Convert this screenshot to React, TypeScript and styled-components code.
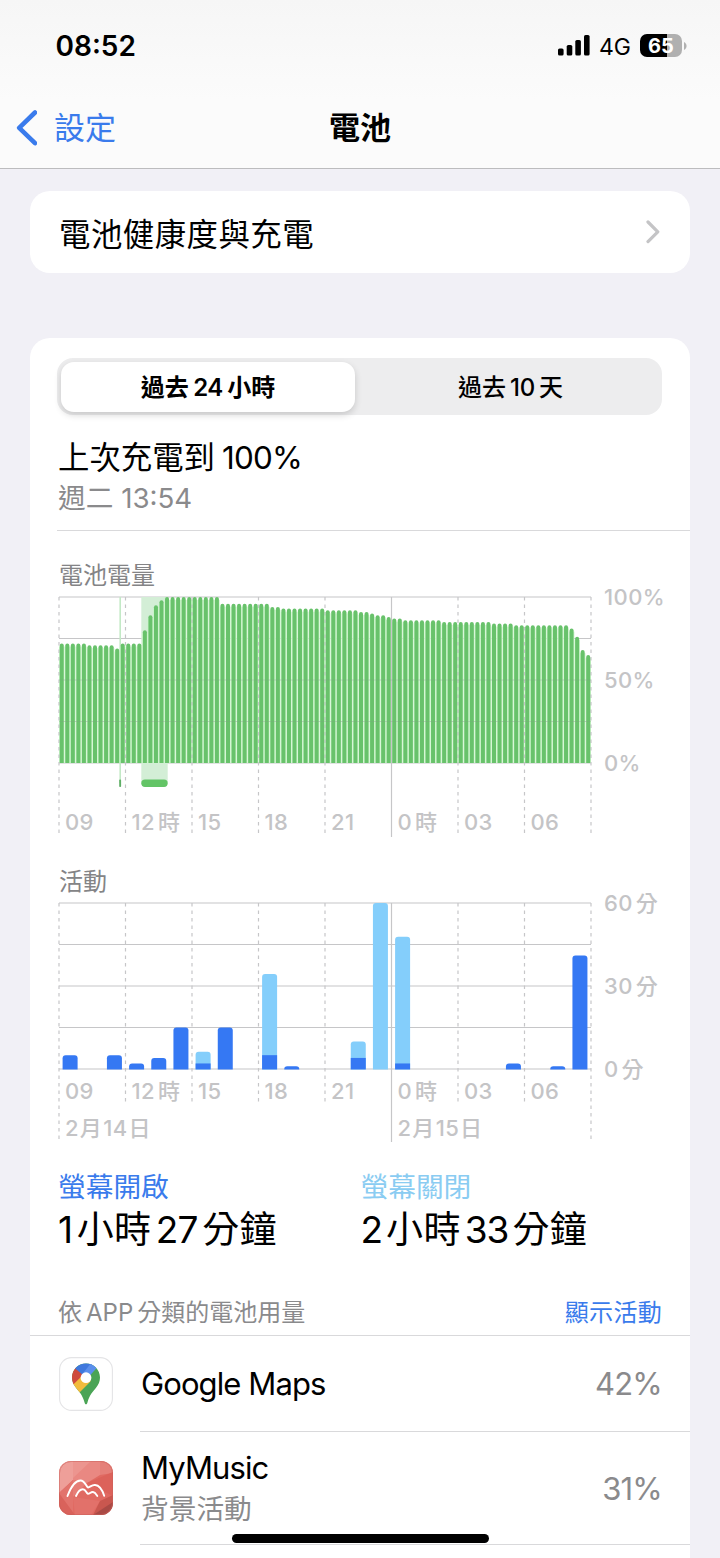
import React from 'react';
import styled, { createGlobalStyle } from 'styled-components';

const GlobalStyle = createGlobalStyle`
  *, *::before, *::after { box-sizing: border-box; }
  body {
    margin: 0;
    background: #f1f0f6;
    color: #000;
    font-family: Inter, "Noto Sans CJK TC", sans-serif;
    text-autospace: no-autospace;
  }
`;

const Screen = styled.div`
  position: relative;
  width: 720px;
  height: 1558px;
  overflow: hidden;
  display: flex;
  flex-direction: column;
`;

/* ---------- mixed-script text ---------- */

const Latin = styled.span<{ $lead: number; $trail: number; $ls: number }>`
  margin-left: ${(p) => p.$lead}px;
  margin-right: ${(p) => p.$trail}px;
  letter-spacing: ${(p) => p.$ls}px;
`;

const splitRuns = (text: string) => text.match(/[\u3000-\u9fff]+|[^\u3000-\u9fff]+/g) ?? [];
const isCjk = (run: string) => /[\u3000-\u9fff]/.test(run);

function Mixed({ text, gap = 4, ls = 0 }: { text: string; gap?: number; ls?: number }) {
  const runs = splitRuns(text);
  return (
    <>
      {runs.map((run, i) =>
        isCjk(run) ? (
          <React.Fragment key={i}>{run}</React.Fragment>
        ) : (
          <Latin key={i} $ls={ls} $lead={i > 0 ? gap : 0} $trail={i < runs.length - 1 ? gap : 0}>
            {run}
          </Latin>
        ),
      )}
    </>
  );
}

/* ---------- header ---------- */

const Header = styled.header`
  flex: none;
  height: 169px;
  border-bottom: 1px solid #bcbcbe;
  background: linear-gradient(#f6f6f6, #fbfbfb 60%);
`;

const StatusBar = styled.div`
  height: 91px;
  padding: 0 33px 0 55.5px;
  display: flex;
  align-items: center;
  justify-content: space-between;
`;

const Clock = styled.span`
  font-size: 28px;
  font-weight: 600;
  line-height: 34px;
  letter-spacing: 0;
`;

const StatusIcons = styled.div`
  display: flex;
  align-items: center;
`;

const Network = styled.span`
  margin: 2px 9px 0;
  font-size: 23px;
  line-height: 28px;
`;

const Battery = styled.div`
  display: flex;
  align-items: center;
  gap: 2px;
`;

const BatteryBody = styled.div`
  width: 42px;
  height: 23px;
  border-radius: 7px;
  background: linear-gradient(90deg, #000 65%, #b0b0b0 65%);
  color: #fff;
  font-size: 20px;
  font-weight: 700;
  line-height: 25px;
  text-align: center;
`;

const NavBar = styled.nav`
  height: 73px;
  display: grid;
  grid-template-columns: 1fr auto 1fr;
  align-items: center;
  padding: 0 16px;
`;

const Back = styled.a`
  display: flex;
  align-items: center;
  gap: 17px;
  color: #3a7bec;
  font-size: 31px;
  line-height: 40px;
`;

const NavTitle = styled.h1`
  margin: 0;
  font-size: 31px;
  font-weight: 600;
  line-height: 40px;
`;

/* ---------- cards ---------- */

const Content = styled.main`
  padding: 22px 30px 0;
`;

const LinkCard = styled.a`
  display: flex;
  align-items: center;
  justify-content: space-between;
  height: 82px;
  padding: 0 30px 0 29px;
  border-radius: 20px;
  background: #fff;
  font-size: 31.4px;
  letter-spacing: 0.5px;
`;

const Card = styled.section`
  margin-top: 65px;
  padding-top: 20px;
  height: 1300px;
  border-radius: 20px;
  background: #fff;
`;

const Segmented = styled.div`
  display: grid;
  grid-template-columns: 294px 1fr;
  gap: 8px;
  height: 57px;
  margin: 0 28px 0 27px;
  padding: 4px;
  border-radius: 16px;
  background: #ededee;
`;

const Segment = styled.div<{ $active?: boolean }>`
  height: 50px;
  border-radius: 13px;
  background: ${(p) => (p.$active ? '#fff' : 'transparent')};
  box-shadow: ${(p) => (p.$active ? '0 3px 7px rgba(0, 0, 0, 0.16)' : 'none')};
  font-size: 24px;
  font-weight: ${(p) => (p.$active ? 600 : 500)};
  line-height: 52px;
  text-align: center;
`;

const LastCharge = styled.div`
  margin: 23px 0 0 27px;
  padding: 0 0 12px 1px;
  border-bottom: 1px solid #d9d9db;
`;

const Headline = styled.div`
  font-size: 31.4px;
  line-height: 40px;
`;

const Subline = styled.div`
  color: #8a8a8c;
  font-size: 27.7px;
  line-height: 40px;
`;

const ChartTitle = styled.h2<{ $top?: number }>`
  margin: ${(p) => p.$top ?? 0}px 0 0 29px;
  padding-top: 1px;
  height: 30px;
  color: #848486;
  font-size: 24px;
  font-weight: 400;
  line-height: 29px;
`;

const ChartSvg = styled.svg`
  display: block;
  overflow: visible;
  font-size: 22px;
  font-weight: 500;
  letter-spacing: 0.4px;
`;

const Totals = styled.div`
  display: grid;
  grid-template-columns: 302.5px 1fr;
  margin-top: 5px;
  padding-left: 28px;
`;

const TotalLabel = styled.div<{ $color: string }>`
  color: ${(p) => p.$color};
  font-size: 27.7px;
  line-height: 33px;
`;

const TotalValue = styled.div`
  font-size: 37px;
  line-height: 52px;
  letter-spacing: 0.3px;
`;

const ListHeader = styled.div`
  display: flex;
  justify-content: space-between;
  margin-top: 34px;
  height: 46px;
  padding: 0 28px;
  border-bottom: 1px solid #d9d9db;
  color: #8a8a8c;
  font-size: 24px;
  line-height: 45px;
`;

const ListAction = styled.a`
  color: #3a7bec;
  letter-spacing: 0.3px;
`;

const AppRow = styled.div<{ $height: number }>`
  display: flex;
  align-items: stretch;
  height: ${(p) => p.$height}px;
  padding-left: 29px;
`;

const AppIcon = styled.svg`
  flex: none;
  align-self: center;
  margin: 0 27px 1px 0;
`;

const AppBody = styled.div`
  flex: 1;
  display: flex;
  align-items: center;
  justify-content: space-between;
  padding: 0 29px 0 1px;
  border-bottom: 1px solid #d9d9db;
`;

const AppName = styled.div`
  font-size: 31px;
  line-height: 42px;
  letter-spacing: -0.9px;
`;

const AppNote = styled.div`
  color: #8a8a8c;
  font-size: 27.7px;
  line-height: 40px;
`;

const AppShare = styled.div`
  margin-right: -1px;
  color: #8a8a8c;
  font-size: 31px;
  letter-spacing: -0.8px;
`;

const HomeIndicator = styled.div`
  position: absolute;
  left: 232px;
  bottom: 15px;
  width: 257px;
  height: 9px;
  border-radius: 5px;
  background: #000;
`;

/* ---------- charts ---------- */

const PLOT = { left: 29, top: 7, width: 532, height: 166 };
const GRID = '#c6c6c8';
const AXIS_TEXT = '#c4c4c6';
const HOURS = ['09', '12時', '15', '18', '21', '0時', '03', '06'];

function AxisText({ x, y, text, gap = 3 }: { x: number; y: number; text: string; gap?: number }) {
  return (
    <text x={x} y={y} fill={AXIS_TEXT}>
      {splitRuns(text).map((run, i) => (
        <tspan key={i} dx={i > 0 ? gap : 0}>
          {run}
        </tspan>
      ))}
    </text>
  );
}

function Rules() {
  return (
    <>
      {[0, 1, 2, 3, 4].map((i) => {
        const y = PLOT.top + (PLOT.height / 4) * i;
        return (
          <line key={i} x1={PLOT.left} x2={PLOT.left + PLOT.width} y1={y} y2={y} stroke={GRID} strokeWidth={1.2} />
        );
      })}
    </>
  );
}

function Verticals({ ends, solidEnd }: { ends: number[]; solidEnd: number }) {
  return (
    <>
      {ends.map((end, i) => {
        const x = PLOT.left + (PLOT.width / 8) * i;
        const solid = i === 5;
        return (
          <line
            key={i}
            x1={x}
            x2={x}
            y1={PLOT.top}
            y2={solid ? solidEnd : end}
            stroke={GRID}
            strokeWidth={1.2}
            strokeDasharray={solid ? undefined : '3.6 3.9'}
          />
        );
      })}
    </>
  );
}

const LEVEL_RUNS: [number, number][] = [
  [72, 5], [71, 5], [69, 1], [72, 4], [80, 1], [89, 1], [95, 1], [98, 1], [100, 10], [96, 9],
  [94, 2], [93, 8], [92, 6], [91, 2], [90, 1], [89, 2], [88, 1], [87, 2], [86, 7], [85, 9],
  [84, 4], [83, 10], [81, 1], [76, 1], [68, 1], [65, 1],
];
const LEVELS = LEVEL_RUNS.flatMap(([level, count]) => Array<number>(count).fill(level));

function LevelChart() {
  const base = PLOT.top + PLOT.height;
  const step = PLOT.width / 96;
  return (
    <ChartSvg width={660} height={276}>
      <Rules />
      <rect x={111.3} y={PLOT.top} width={26.4} height={186} fill="#d3eed6" />
      <rect x={89.4} y={PLOT.top} width={1.6} height={186} fill="#c3e9c6" />
      {LEVELS.map((level, i) => {
        const h = (PLOT.height * level) / 100;
        return (
          <rect key={`g${i}`} x={PLOT.left + i * step} y={base - h + 3} width={step} height={h - 3} fill="#cdf5cc" />
        );
      })}
      <Verticals ends={Array(9).fill(244)} solidEnd={247} />
      {LEVELS.map((level, i) => {
        const x = PLOT.left + i * step + 0.75;
        const y = base - (PLOT.height * level) / 100;
        return <path key={i} d={`M${x} ${base}V${y + 2}a2 2 0 0 1 4 0V${base}Z`} fill="#68c26b" />;
      })}
      {[2, 3].map((i) => (
        <line
          key={i}
          x1={PLOT.left}
          x2={PLOT.left + PLOT.width}
          y1={PLOT.top + 41.5 * i}
          y2={PLOT.top + 41.5 * i}
          stroke="#7f9f80"
          strokeOpacity={0.28}
        />
      ))}
      <rect x={111.3} y={189.6} width={26.4} height={7.4} rx={3.7} fill="#63c466" />
      <rect x={89.2} y={189.6} width={1.9} height={7.4} rx={0.8} fill="#5fae66" />
      {HOURS.map((label, i) => (
        <AxisText key={label} x={35 + 66.5 * i} y={239.8} text={label} />
      ))}
      <AxisText x={574} y={15} text="100%" />
      <AxisText x={574} y={98} text="50%" />
      <AxisText x={574} y={181} text="0%" />
    </ChartSvg>
  );
}

const ACTIVITY: { hour: number; on: number; off?: number }[] = [
  { hour: 0, on: 5 },
  { hour: 2, on: 5 },
  { hour: 3, on: 2 },
  { hour: 4, on: 4 },
  { hour: 5, on: 15 },
  { hour: 6, on: 2, off: 4.2 },
  { hour: 7, on: 15 },
  { hour: 9, on: 5, off: 29.3 },
  { hour: 10, on: 1 },
  { hour: 13, on: 4, off: 5.9 },
  { hour: 14, on: 0, off: 60 },
  { hour: 15, on: 2, off: 45.8 },
  { hour: 20, on: 2 },
  { hour: 22, on: 1 },
  { hour: 23, on: 41 },
];

function ActivityChart() {
  const base = PLOT.top + PLOT.height;
  const unit = PLOT.height / 60;
  return (
    <ChartSvg width={660} height={270}>
      <Rules />
      <Verticals ends={[243, 208, 208, 208, 208, 0, 208, 208, 243]} solidEnd={246} />
      {ACTIVITY.map(({ hour, on, off = 0 }) => {
        const x = PLOT.left + (PLOT.width / 24) * hour + 3.6;
        const h = (on + off) * unit;
        const r = Math.min(3, h);
        return (
          <g key={hour}>
            <path
              d={`M${x} ${base + 0.4}V${base - h + r}q0 ${-r} 3 ${-r}h9q3 0 3 ${r}V${base + 0.4}Z`}
              fill={off ? '#84cefb' : '#3578f3'}
            />
            {off > 0 && on > 0 && (
              <rect x={x} y={base - on * unit} width={15} height={on * unit + 0.4} fill="#3578f3" />
            )}
          </g>
        );
      })}
      {HOURS.map((label, i) => (
        <AxisText key={label} x={35 + 66.5 * i} y={202.8} text={label} />
      ))}
      <AxisText x={35} y={240.4} text="2月14日" gap={0.9} />
      <AxisText x={367.5} y={240.4} text="2月15日" gap={0.9} />
      <AxisText x={574} y={15} text="60分" />
      <AxisText x={574} y={98} text="30分" />
      <AxisText x={574} y={181} text="0分" />
    </ChartSvg>
  );
}

/* ---------- icons ---------- */

function MapsIcon() {
  return (
    <AppIcon width={54} height={54} viewBox="0 0 54 54">
      <defs>
        <clipPath id="pin">
          <path d="M27 6.5c-7.8 0-14 6.2-14 14 0 4 1.5 7 3.8 10 3.6 4.6 6.7 7.5 8.6 14.5.4 1.5.8 2.3 1.6 2.3s1.2-.8 1.6-2.3c1.9-7 5-9.9 8.6-14.5 2.3-3 3.8-6 3.8-10 0-7.8-6.200-14-14-14z" />
        </clipPath>
      </defs>
      <rect x={0.6} y={0.6} width={52.8} height={52.8} rx={12} fill="#fff" stroke="#e4e4e6" strokeWidth={1.1} />
      <g clipPath="url(#pin)">
        <rect x={12} y={6} width={30} height={42} fill="#4aa456" />
        <path d="M9 47L31.5 24.5 31 17 22 18 9 32z" fill="#f2bb3c" />
        <path d="M9 32.5L24.5 17.5 15.5 10 9 10z" fill="#cf4a3d" />
        <path d="M15 10.5L24 18 34 8V4H12z" fill="#3f78dd" />
        <path d="M22.5 18L31.8 6.5 38.5 10 31 18.5z" fill="#5b8fec" />
      </g>
      <circle cx={27} cy={20.7} r={5.4} fill="#fff" />
    </AppIcon>
  );
}

function MusicIcon() {
  return (
    <AppIcon width={54} height={54} viewBox="0 0 54 54">
      <defs>
        <clipPath id="tile">
          <rect width={54} height={54} rx={12} />
        </clipPath>
      </defs>
      <g clipPath="url(#tile)">
        <rect width={54} height={54} fill="#e06a62" />
        <path d="M0 0h14v19L0 32z" fill="#ee9f99" />
        <path d="M14 0h27v14L28 22 14 19z" fill="#e98882" />
        <path d="M14 0H32L14 17z" fill="#ec958f" />
        <path d="M41 0h13v12L41 14z" fill="#e58079" />
        <path d="M54 11v24L28 22z" fill="#dc625a" />
        <path d="M14 19l14 3-14 14z" fill="#e67d76" />
        <path d="M0 32l14-13v35H0z" fill="#e2736c" />
        <path d="M0 32l16 22H0z" fill="#d9625b" />
        <path d="M14 36l27 4-9 14H16z" fill="#e2716a" />
        <path d="M54 34v8L34 54l7-14z" fill="#c9574f" />
        <path d="M54 41v13H34z" fill="#a94a45" />
      </g>
      <rect x={0.5} y={0.5} width={53} height={53} rx={11.6} fill="none" stroke="#c9605a" strokeOpacity={0.5} />
      <g fill="none" stroke="#fff" strokeLinecap="round" strokeLinejoin="round" strokeWidth={1.9}>
        <path d="M8.5 35C11.5 27 16 19.5 21.5 19.5c4.5 0 5.2 5.5 7.5 7 2.3-.3 3.5-2.700 7-2.500 5 .3 7.500 5.500 9.200 10.800" />
        <path d="M17 35c1.8-4 4-6.800 6.800-6.800 3.200 0 3.200 4 5.200 4.600 1.800 0 2.700-2 5-1.800 2 .2 3 2 4.300 4" />
      </g>
    </AppIcon>
  );
}

/* ---------- page ---------- */

export default function App() {
  return (
    <>
      <GlobalStyle />
      <Screen>
        <Header>
          <StatusBar>
            <Clock>08:52</Clock>
            <StatusIcons>
              <svg width={32} height={21} viewBox="0 0 32 21">
                <rect x={0} y={13.5} width={5.6} height={7} rx={1.6} />
                <rect x={8.7} y={10} width={5.6} height={10.5} rx={1.6} />
                <rect x={17.3} y={5} width={5.6} height={15.5} rx={1.6} />
                <rect x={26} y={0} width={5.6} height={20.5} rx={1.6} />
              </svg>
              <Network>4G</Network>
              <Battery>
                <BatteryBody>65</BatteryBody>
                <svg width={3} height={8} viewBox="0 0 3 8">
                  <path d="M0 0c3.4 1.6 3.4 6.4 0 8z" fill="#b0b0b0" />
                </svg>
              </Battery>
            </StatusIcons>
          </StatusBar>
          <NavBar>
            <Back>
              <svg width={21} height={36} viewBox="0 0 21 36">
                <path
                  d="M19 2.5L3.2 17.8 19 33.1"
                  fill="none"
                  stroke="#3a7bec"
                  strokeWidth={4.6}
                  strokeLinecap="round"
                  strokeLinejoin="round"
                />
              </svg>
              設定
            </Back>
            <NavTitle>電池</NavTitle>
          </NavBar>
        </Header>
        <Content>
          <LinkCard>
            電池健康度與充電
            <svg width={14} height={24} viewBox="0 0 14 24">
              <path
                d="M2 2l9.8 9.8L2 21.6"
                fill="none"
                stroke="#c4c4c6"
                strokeWidth={3.2}
                strokeLinecap="round"
                strokeLinejoin="round"
              />
            </svg>
          </LinkCard>
          <Card>
            <Segmented>
              <Segment $active>
                <Mixed text="過去24小時" gap={4.5} ls={-0.5} />
              </Segment>
              <Segment>
                <Mixed text="過去10天" gap={4} ls={-0.3} />
              </Segment>
            </Segmented>
            <LastCharge>
              <Headline>
                <Mixed text="上次充電到100%" gap={7} ls={-0.8} />
              </Headline>
              <Subline>
                <Mixed text="週二 13:54" gap={0} />
              </Subline>
            </LastCharge>
            <ChartTitle $top={29}>電池電量</ChartTitle>
            <LevelChart />
            <ChartTitle>活動</ChartTitle>
            <ActivityChart />
            <Totals>
              <div>
                <TotalLabel $color="#3a7bec">螢幕開啟</TotalLabel>
                <TotalValue>
                  <Mixed text="1小時27分鐘" gap={4.5} ls={-0.8} />
                </TotalValue>
              </div>
              <div>
                <TotalLabel $color="#8accf2">螢幕關閉</TotalLabel>
                <TotalValue>
                  <Mixed text="2小時33分鐘" gap={4} ls={-1} />
                </TotalValue>
              </div>
            </Totals>
            <ListHeader>
              <span>
                <Mixed text="依APP分類的電池用量" gap={4} />
              </span>
              <ListAction>顯示活動</ListAction>
            </ListHeader>
            <AppRow $height={96}>
              <MapsIcon />
              <AppBody>
                <AppName>Google Maps</AppName>
                <AppShare>42%</AppShare>
              </AppBody>
            </AppRow>
            <AppRow $height={113}>
              <MusicIcon />
              <AppBody>
                <div>
                  <AppName>MyMusic</AppName>
                  <AppNote>背景活動</AppNote>
                </div>
                <AppShare>31%</AppShare>
              </AppBody>
            </AppRow>
          </Card>
        </Content>
        <HomeIndicator />
      </Screen>
    </>
  );
}
